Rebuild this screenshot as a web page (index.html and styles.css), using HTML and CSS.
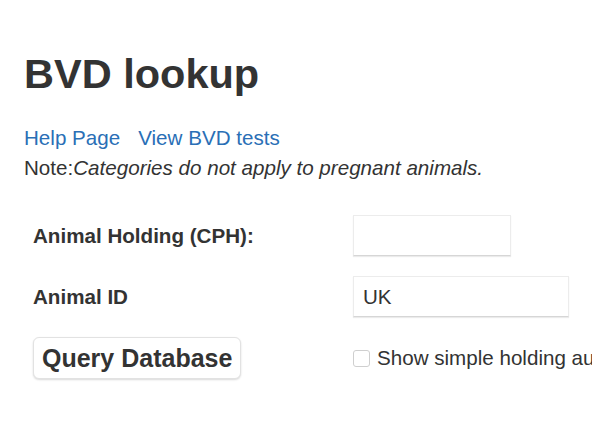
FILE: index.html
```html
<!DOCTYPE html>
<html lang="en">
<head>
<meta charset="utf-8">
<title>BVD lookup</title>
<link rel="stylesheet" href="styles.css">
</head>
<body>
<div class="container">
  <h1 class="title">BVD lookup</h1>
  <div class="links">
    <a href="#" class="link">Help Page</a>
    <a href="#" class="link">View BVD tests</a>
  </div>
  <p class="note">Note:<em>Categories do not apply to pregnant animals.</em></p>
  <form class="form">
    <label class="label" for="cph">Animal Holding (CPH):</label>
    <div class="field"><input id="cph" class="input input-short" type="text"></div>
    <label class="label" for="aid">Animal ID</label>
    <div class="field"><input id="aid" class="input input-long" type="text" value="UK"></div>
    <div class="field"><button type="button" class="btn">Query Database</button></div>
    <div class="field check-row">
      <span class="checkbox"></span>
      <span class="check-text">Show simple holding audit</span>
    </div>
  </form>
</div>
</body>
</html>
```
FILE: styles.css
```css
html, body {
  margin: 0;
  padding: 0;
  overflow: hidden;
  background: #fff;
}
body {
  font-family: "Liberation Sans", Arial, sans-serif;
  font-size: 20.6px;
  line-height: 30px;
  color: #333;
  width: 592px;
  height: 444px;
}
.container {
  padding: 51px 0 0 24px;
}
.title {
  margin: 0 0 27px 0;
  font-size: 41.5px;
  line-height: 45px;
  font-weight: bold;
  color: #333;
}
.links {
  display: flex;
  gap: 18px;
}
.link {
  color: #2a6fb6;
  text-decoration: none;
}
.note {
  margin: 0;
}
.form {
  display: grid;
  grid-template-columns: 320px auto;
  row-gap: 20px;
  margin-top: 32px;
  padding-left: 9px;
  align-items: center;
}
.label {
  font-weight: bold;
}
.field {
  display: flex;
  align-items: center;
}
.input {
  box-sizing: border-box;
  height: 41px;
  border: 1px solid #ececec;
  border-bottom-color: #d6d6d6;
  box-shadow: 0 1px 1px rgba(0,0,0,0.08);
  font-family: "Liberation Sans", Arial, sans-serif;
  font-size: 20.6px;
  color: #333;
  padding: 0 9px;
  outline: none;
}
.input-short { width: 158px; }
.input-long { width: 216px; }
.btn {
  box-sizing: border-box;
  height: 42px;
  padding: 0 8px;
  background: #fff;
  border: 1px solid #e2e2e2;
  border-radius: 6px;
  box-shadow: 0 1px 2px rgba(0,0,0,0.15);
  font-family: "Liberation Sans", Arial, sans-serif;
  font-size: 25px;
  font-weight: bold;
  color: #333;
}
.check-row {
  white-space: nowrap;
  gap: 7px;
}
.checkbox {
  box-sizing: border-box;
  width: 17px;
  height: 17px;
  border: 1px solid #cfcfcf;
  border-radius: 3px;
  background: #fff;
  flex: none;
}
.check-text {
  color: #333;
}
```
